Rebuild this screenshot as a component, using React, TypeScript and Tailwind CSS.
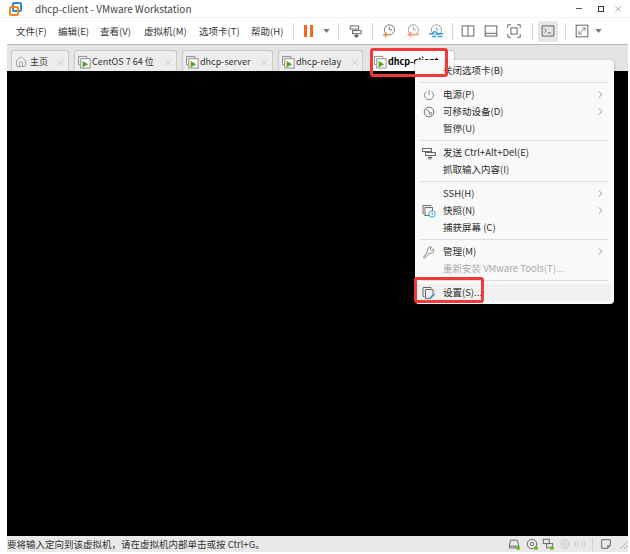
import { ChevronRight, Home, X } from 'lucide-react';

const font = 'font-["Noto_Sans_CJK_SC","Liberation_Sans",sans-serif]';

const menus = [
  { label: '文件(F)', w: 'w-[42px]' },
  { label: '编辑(E)', w: 'w-[42px]' },
  { label: '查看(V)', w: 'w-[44px]' },
  { label: '虚拟机(M)', w: 'w-[55px]' },
  { label: '选项卡(T)', w: 'w-[52px]' },
  { label: '帮助(H)', w: 'w-[42px]' },
];

const Sep = ({ className = '' }: { className?: string }) => <div className={`h-[17px] w-px shrink-0 bg-[#d4d4d4] ${className}`} />;

const Caret = ({ className = '' }: { className?: string }) => (
  <svg width="7" height="4" viewBox="0 0 8 5" className={`shrink-0 ${className}`}>
    <path d="M0 0h8L4 5z" fill="#7a7a7a" />
  </svg>
);

const ToolIcon = ({ children, className = '' }: { children: React.ReactNode; className?: string }) => (
  <svg width="14" height="14" viewBox="0 0 18 18" fill="none" stroke="#5a5a5a" strokeWidth="1.200" className={`shrink-0 ${className}`}>
    {children}
  </svg>
);

const NetIcon = () => (
  <>
    <rect x="1.500" y="2.500" width="11" height="4" />
    <rect x="4.500" y="8.500" width="11" height="4" />
    <path d="M9.500 12.500v3" />
    <path d="M7 15h5l-2.500 2.500z" fill="#5a5a5a" />
  </>
);

const ClockIcon = ({ color, kind, className = '' }: { color: string; kind: 'plus' | 'back' | 'wrench'; className?: string }) => (
  <ToolIcon className={className}>
    <circle cx="9.500" cy="7.500" r="6.500" stroke={kind === 'plus' ? '#6a6a6a' : '#9a9a9a'} />
    <path d="M9.500 3.500v4h3.500" stroke={kind === 'plus' ? '#6a6a6a' : '#9a9a9a'} />
    {kind === 'plus' && <path d="M1 14h7M4.500 10.500v7" stroke={color} strokeWidth="1.500" />}
    {kind === 'back' && <path d="M3 13.500h14M7 10.500l-4 3 4 3" stroke={color} strokeWidth="1.800" />}
    {kind === 'wrench' && <path d="M0 12.500h5a2.500 2.500 0 0 1 5 0h8M4 16h5M11 16h6" stroke={color} strokeWidth="1.800" />}
  </ToolIcon>
);

const VmIcon = ({ running = true }: { running?: boolean }) => (
  <svg width="13" height="14" viewBox="0 0 14 15" fill="none" stroke="#888" strokeWidth="1" className="shrink-0">
    <path d="M2.500 10.500H0.500v-9h9v2" />
    <rect x="3" y="4" width="10" height="10" fill="#fff" />
    {running && <path d="M5 6.500v7l6-3.500z" fill="#4fa31e" stroke="none" />}
  </svg>
);

const Tab = ({ label, w, home, running, active, className = '' }: { label: string; w: string; home?: boolean; running?: boolean; active?: boolean; className?: string }) => (
  <div
    className={`${w} ${className} h-[21px] shrink-0 flex items-center pt-[2px] pl-[3px] pr-[2px] gap-[1px] border border-b-0 border-[#c9c9c9] rounded-t-[3px] ${
      active ? 'bg-white font-bold text-black' : 'bg-[#ededed] text-[#333]'
    }`}
  >
    {home ? <Home size={12} strokeWidth={1} className="text-[#666] shrink-0 mr-[2px]" /> : <VmIcon running={running} />}
    <span className="text-[9px] whitespace-nowrap flex-1 min-w-0">{label}</span>
    <X size={11} strokeWidth={1.200} className="text-[#b5b5b5] shrink-0" />
  </div>
);

type Row =
  | { sep: true }
  | { sep?: false; label: string; icon?: React.ReactNode; arrow?: boolean; disabled?: boolean; hover?: boolean };

const MenuIconWrap = ({ children }: { children: React.ReactNode }) => (
  <svg width="14" height="14" viewBox="0 0 14 14" fill="none" stroke="#6a6a6a" strokeWidth="1">
    {children}
  </svg>
);

const rows: Row[] = [
  { label: '关闭选项卡(B)' },
  { sep: true },
  {
    label: '电源(P)',
    arrow: true,
    icon: (
      <MenuIconWrap>
        <path d="M4.500 3.500a4.500 4.500 0 1 0 5 0M7 2v5" stroke="#888" />
      </MenuIconWrap>
    ),
  },
  {
    label: '可移动设备(D)',
    arrow: true,
    icon: (
      <MenuIconWrap>
        <circle cx="7" cy="7" r="4.800" />
        <path d="M4.500 4.500l3.500 3" />
        <circle cx="8.500" cy="8.500" r="1" />
      </MenuIconWrap>
    ),
  },
  { label: '暂停(U)' },
  { sep: true },
  {
    label: '发送 Ctrl+Alt+Del(E)',
    icon: (
      <MenuIconWrap>
        <rect x="0.500" y="2.500" width="9" height="3" />
        <rect x="3.500" y="6.500" width="10" height="3" />
        <path d="M8 9.500v2M6 11.500h4L8 13.500z" />
      </MenuIconWrap>
    ),
  },
  { label: '抓取输入内容(I)' },
  { sep: true },
  { label: 'SSH(H)', arrow: true },
  {
    label: '快照(N)',
    arrow: true,
    icon: (
      <MenuIconWrap>
        <path d="M2.500 9.500h-1.500v-8h8v1" />
        <rect x="3" y="3.500" width="7.500" height="8" />
        <circle cx="10" cy="10" r="3.200" fill="#fff" stroke="#2fa6d8" />
        <path d="M10 8.500v1.700h1.400" stroke="#2fa6d8" />
      </MenuIconWrap>
    ),
  },
  { label: '捕获屏幕 (C)' },
  { sep: true },
  {
    label: '管理(M)',
    arrow: true,
    icon: (
      <MenuIconWrap>
        <path d="M1.500 12.500l1 .8 5-5.300a3 3 0 0 0 4-4l-2 1.500-1.500-1.500L9.500 2a3 3 0 0 0-3.800 4z" stroke="#888" />
      </MenuIconWrap>
    ),
  },
  { label: '重新安装 VMware Tools(T)...', disabled: true },
  { sep: true },
  {
    label: '设置(S)...',
    hover: true,
    icon: (
      <MenuIconWrap>
        <path d="M2.500 10.500h-1.500v-9h8v1" />
        <path d="M3.500 3.500h7.500v5l-3 4h-4.500z" />
        <path d="M7.500 13l5-5" stroke="#2d8fd5" strokeWidth="1.600" />
      </MenuIconWrap>
    ),
  },
];

const ContextMenu = () => (
  <div className="absolute left-[415px] top-[60px] w-[199px] bg-[#f9f9f9] rounded-[4px] shadow-[0_1px_3px_rgba(0,0,0,0.3)] pt-[2px] pb-[3px] pl-[1px] pr-[3px] text-[9.500px] text-[#2b2b2b]">
    {rows.map((r, i) =>
      r.sep ? (
        <div key={i} className="h-[7px] flex items-center pl-[5px] pr-[3px]">
          <div className="h-px w-full bg-[#dcdcdc]" />
        </div>
      ) : (
        <div key={i} className={`h-[17px] flex items-center rounded-[3px] ${r.hover ? 'bg-[#f0f0f0]' : ''}`}>
          <div className="w-[27px] pl-[6px] flex items-center shrink-0">{r.icon}</div>
          <span className={`flex-1 whitespace-nowrap ${r.disabled ? 'text-[#a8a8a8]' : ''}`}>{r.label}</span>
          {r.arrow && <ChevronRight size={11} strokeWidth={1.500} className="text-[#666] mr-[5px]" />}
        </div>
      ),
    )}
  </div>
);

const StatusDot = ({ children, dot, className = '' }: { children: React.ReactNode; dot?: boolean; className?: string }) => (
  <div className={`relative w-[12px] h-[12px] shrink-0 ${className}`}>
    <svg width="12" height="12" viewBox="0 0 14 14" fill="none" stroke={dot ? '#666' : '#c2c2c2'} strokeWidth="1.100">
      {children}
    </svg>
    {dot && <div className="absolute right-0 bottom-0 w-[4px] h-[4px] rounded-full bg-[#5fc21e]" />}
  </div>
);

export default function App() {
  return (
    <div className={`relative w-[630px] h-[554px] bg-white overflow-hidden flex flex-col ${font}`}>
      {/* title bar */}
      <div className="h-[17px] flex items-center pl-[9px] shrink-0">
        <svg width="13" height="14" viewBox="0 0 13 14" fill="none" className="shrink-0">
          <rect x="4" y="1" width="8" height="8" rx="1" stroke="#2f87c5" strokeWidth="2" />
          <rect x="1" y="5" width="8" height="8" rx="1" stroke="#f08a1d" strokeWidth="2" />
        </svg>
        <span className="ml-[13px] text-[10px] text-[#444] whitespace-nowrap">dhcp-client - VMware Workstation</span>
        <div className="ml-auto flex items-center text-[#444] pr-[7px]">
          <div className="w-[6px] h-px bg-[#555]" />
          <div className="ml-[16px] w-[6px] h-[6px] border border-[#333]" />
          <X size={10} strokeWidth={1} className="ml-[9px]" />
        </div>
      </div>

      {/* menu and toolbar */}
      <div className="h-[27px] flex items-center pl-[16px] shrink-0 border-t border-[#f1f1f1] text-[9.500px] text-[#333]">
        {menus.map((m) => (
          <span key={m.label} className={`${m.w} whitespace-nowrap`}>
            {m.label}
          </span>
        ))}
        <Sep />
        <div className="ml-[10px] flex gap-[3px]">
          <div className="w-[3px] h-[12px] bg-[#f26a21]" />
          <div className="w-[3px] h-[12px] bg-[#f26a21]" />
        </div>
        <Caret className="ml-[10px]" />
        <Sep className="ml-[8px]" />
        <ToolIcon className="ml-[10px]">
          <NetIcon />
        </ToolIcon>
        <Sep className="ml-[9px]" />
        <ClockIcon color="#ef7a3a" kind="plus" className="ml-[9px]" />
        <ClockIcon color="#f4a27a" kind="back" className="ml-[10px]" />
        <ClockIcon color="#2d9be0" kind="wrench" className="ml-[9px]" />
        <Sep className="ml-[9px]" />
        <ToolIcon className="ml-[8px]">
          <rect x="1.500" y="2.500" width="15" height="13" />
          <path d="M9 2.500v13" />
        </ToolIcon>
        <ToolIcon className="ml-[9px]">
          <rect x="1.500" y="2.500" width="15" height="13" />
          <path d="M1.500 12h15" />
        </ToolIcon>
        <ToolIcon className="ml-[9px]">
          <path d="M1 5V1h4M13 1h4v4M1 13v4h4M13 17h4v-4" />
          <rect x="5" y="5" width="8" height="8" />
        </ToolIcon>
        <Sep className="ml-[11px]" />
        <div className="ml-[5px] w-[20px] h-[21px] shrink-0 rounded-[3px] bg-[#e6e6e6] flex items-center justify-center">
          <ToolIcon>
            <rect x="1.500" y="2.500" width="15" height="13" />
            <path d="M4.500 6l2.500 2.500-2.500 2.500M8.500 11.500h4.500" />
          </ToolIcon>
        </div>
        <Sep className="ml-[7px]" />
        <ToolIcon className="ml-[9px]">
          <rect x="1.500" y="1.500" width="15" height="15" />
          <path d="M5 13l8-8M9 5h4v4M5 9v4h4" stroke="#888" />
        </ToolIcon>
        <Caret className="ml-[6px]" />
      </div>

      {/* tabs */}
      <div className="h-[27px] shrink-0 ml-[7px] mr-[2px] bg-[#e4e4e4] border-t border-[#b9b9b9] flex items-end pl-[4px] gap-[5px]">
        <Tab label="主页" w="w-[58px]" home />
        <Tab label="CentOS 7 64 位" w="w-[103px]" />
        <Tab label="dhcp-server" w="w-[91px]" running />
        <Tab label="dhcp-relay" w="w-[85px]" running />
        <Tab label="dhcp-client" w="w-[85px]" running active className="ml-[2px]" />
      </div>

      {/* vm screen */}
      <div className="flex-1 ml-[7px] mr-[2px] bg-black" />

      {/* status bar */}
      <div className="h-[16px] mb-[2px] shrink-0 ml-[7px] mr-[2px] bg-[#e9e9e9] flex items-center text-[9.500px] text-[#333]">
        <span className="whitespace-nowrap">要将输入定向到该虚拟机，请在虚拟机内部单击或按 Ctrl+G。</span>
        <div className="ml-auto flex items-center">
          <StatusDot dot>
            <path d="M3 2.500h8l1.500 7v2h-11v-2zM1.500 9.500h11" />
          </StatusDot>
          <StatusDot dot className="ml-[6px]">
            <circle cx="7" cy="7" r="5.500" />
            <circle cx="7" cy="7" r="2" />
          </StatusDot>
          <StatusDot dot className="ml-[4px]">
            <rect x="1.500" y="1.500" width="7" height="5" />
            <rect x="5.500" y="6.500" width="7" height="5" />
          </StatusDot>
          <StatusDot className="ml-[5px]">
            <circle cx="7" cy="7" r="5" />
            <circle cx="7" cy="7" r="2" />
          </StatusDot>
          <StatusDot className="ml-[3px]">
            <path d="M3 3a6 6 0 0 0 0 8M11 3a6 6 0 0 1 0 8M5 5a3 3 0 0 0 0 4M9 5a3 3 0 0 1 0 4" />
          </StatusDot>
          <div className="w-px h-[13px] bg-[#cfcfcf] ml-[6px]" />
          <StatusDot className="ml-[7px]">
            <path d="M2 2h10v7l-3 3H2zM12 9H9v3" stroke="#666" />
          </StatusDot>
          <svg width="10" height="10" viewBox="0 0 10 10" stroke="#b5b5b5" strokeWidth="1" className="ml-[6px] shrink-0">
            <path d="M2 10l8-8M6 10l4-4" />
          </svg>
        </div>
      </div>

      <ContextMenu />

      {/* red annotation boxes */}
      <div className="absolute left-[370px] top-[48px] w-[78px] h-[29px] border-[3px] border-[#f03a3a] rounded-[3px] pointer-events-none" />
      <div className="absolute left-[414px] top-[277px] w-[70px] h-[26px] border-[3px] border-[#f03a3a] rounded-[3px] pointer-events-none" />
    </div>
  );
}
